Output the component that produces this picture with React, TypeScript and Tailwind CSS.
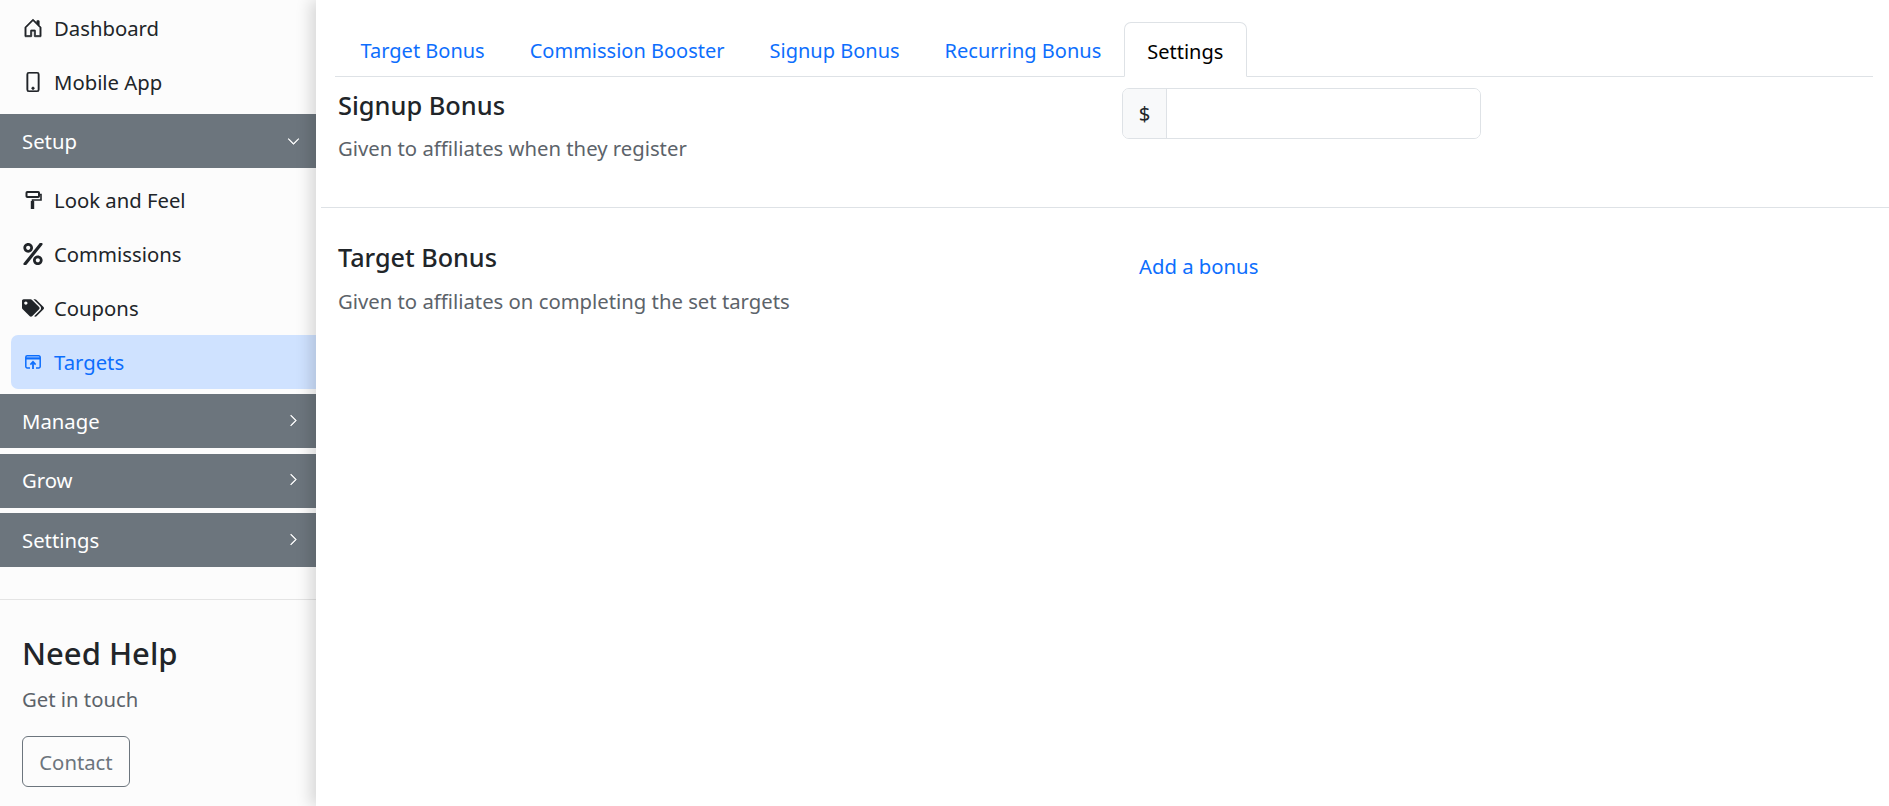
import { ReactNode } from "react";
import { BsChevronDown, BsChevronRight, BsHouseDoor, BsPhone } from "react-icons/bs";
import { FaPercent, FaTags } from "react-icons/fa";

const RollerIcon = () => (
  <svg viewBox="0 0 16 18" className="w-[17px] h-[18px] ml-[3px]" fill="none" stroke="currentColor" strokeWidth="2">
    <rect x="1" y="1" width="12.5" height="5" rx="0.8" />
    <path d="M14.5 3.5H15.5V9H7V10" strokeWidth="1.6" />
    <path d="M7 10v8" strokeWidth="3.4" />
  </svg>
);

const TargetsIcon = () => (
  <svg viewBox="0 0 16 14" className="w-[16px] h-[14px] ml-[3px]" fill="none" stroke="currentColor" strokeWidth="1.5">
    <path d="M5 13H2.2A1.4 1.4 0 0 1 .8 11.6V2.2A1.4 1.4 0 0 1 2.2.8h11.6a1.4 1.4 0 0 1 1.4 1.4v9.4a1.4 1.4 0 0 1-1.4 1.4H11" />
    <path d="M1 3.4h14" strokeWidth="2.2" />
    <path d="M8 14V7.6" strokeWidth="1.8" />
    <path d="M5.4 9.6 8 6.8l2.6 2.8" strokeWidth="1.6" />
  </svg>
);

const NavItem = ({ icon, label, active }: { icon: ReactNode; label: string; active?: boolean }) => (
  <div
    className={
      active
        ? "h-[54px] ml-[11px] pl-[11px] flex items-center bg-[#cfe2ff] text-[#0d6efd] rounded-l-[7px]"
        : "h-[54px] ml-[11px] pl-[11px] flex items-center text-[#212529]"
    }
  >
    <span className="w-[32px] flex items-center shrink-0">{icon}</span>
    <span>{label}</span>
  </div>
);

const GroupHeader = ({ label, open }: { label: string; open?: boolean }) => (
  <div className="h-[54px] pl-[22px] pr-[16px] flex items-center justify-between bg-[#6c757d] text-white">
    <span>{label}</span>
    {open ? (
      <BsChevronDown size={13} stroke="currentColor" strokeWidth={0.8} />
    ) : (
      <BsChevronRight size={13} stroke="currentColor" strokeWidth={0.8} className="-mt-[2px]" />
    )}
  </div>
);

const tabs = ["Target Bonus", "Commission Booster", "Signup Bonus", "Recurring Bonus"];

export default function App() {
  return (
    <div className="h-[806px] w-full flex overflow-hidden bg-white font-['Noto_Sans',sans-serif] text-[20.3px] leading-[28.8px] text-[#212529]">
      {/* Sidebar */}
      <aside className="w-[316px] shrink-0 bg-[#fcfcfc] pt-px">
        <NavItem icon={<BsHouseDoor size={20} stroke="currentColor" strokeWidth={0.5} className="ml-[1px]" />} label="Dashboard" />
        <NavItem icon={<BsPhone size={20} stroke="currentColor" strokeWidth={0.5} className="ml-[1px]" />} label="Mobile App" />
        <div className="mt-[5px]">
          <GroupHeader label="Setup" open />
        </div>
        <div className="mt-[5px]">
          <NavItem icon={<RollerIcon />} label="Look and Feel" />
          <NavItem icon={<FaPercent size={22} />} label="Commissions" />
          <NavItem icon={<FaTags size={22} />} label="Coupons" />
          <NavItem icon={<TargetsIcon />} label="Targets" active />
        </div>
        <div className="mt-[5px] flex flex-col gap-[5.5px]">
          <GroupHeader label="Manage" />
          <GroupHeader label="Grow" />
          <GroupHeader label="Settings" />
        </div>
        <div className="mt-[32px] border-t border-[#e4e4e4] pl-[22px] pt-[33px]">
          <h3 className="text-[31px] leading-[40px] font-medium text-[#212529]">Need Help</h3>
          <p className="mt-[12px] text-[#5c636a]">Get in touch</p>
          <button className="mt-[22px] h-[51px] w-[108px] pt-[3px] border border-[#6c757d] rounded-[6px] text-[#6c757d]">
            Contact
          </button>
        </div>
      </aside>

      {/* Main */}
      <main className="flex-1 relative bg-white shadow-[-6px_0_14px_rgba(0,0,0,0.14)]">
        <div className="mt-[22px] ml-[19px] mr-[16px] h-[55px] flex border-b border-[#dee2e6]">
          <div className="ml-[3px] flex">
            {tabs.map((t) => (
              <div key={t} className="px-[22.5px] pt-[15px] text-[#0d6efd] text-[20px]">
                {t}
              </div>
            ))}
            <div className="h-[55px] px-[22.5px] pt-[15px] bg-white border border-[#dee2e6] border-b-white rounded-t-[7px] text-black text-[20px]">
              Settings
            </div>
          </div>
        </div>

        <div className="ml-[5px] h-[131px] border-b border-[#dee2e6] flex">
          <div className="w-[801px] pl-[17px] pt-[11px]">
            <h5 className="text-[25.4px] leading-[34px] font-medium">Signup Bonus</h5>
            <p className="mt-[12px] text-[#5c636a]">Given to affiliates when they register</p>
          </div>
          <div className="mt-[11px] w-[359px] h-[51px] flex border border-[#dee2e6] rounded-[7px] overflow-hidden">
            <div className="w-[44px] bg-[#f8f9fa] border-r border-[#dee2e6] flex items-center justify-center">$</div>
            <input className="flex-1 outline-none bg-white" />
          </div>
        </div>

        <div className="flex">
          <div className="w-[806px] pl-[22px] pt-[32px]">
            <h5 className="text-[25.2px] leading-[34px] font-medium">Target Bonus</h5>
            <p className="mt-[13px] text-[#5c636a]">Given to affiliates on completing the set targets</p>
          </div>
          <div className="pl-[17px] pt-[44px] text-[#0d6efd]">Add a bonus</div>
        </div>
      </main>
    </div>
  );
}
